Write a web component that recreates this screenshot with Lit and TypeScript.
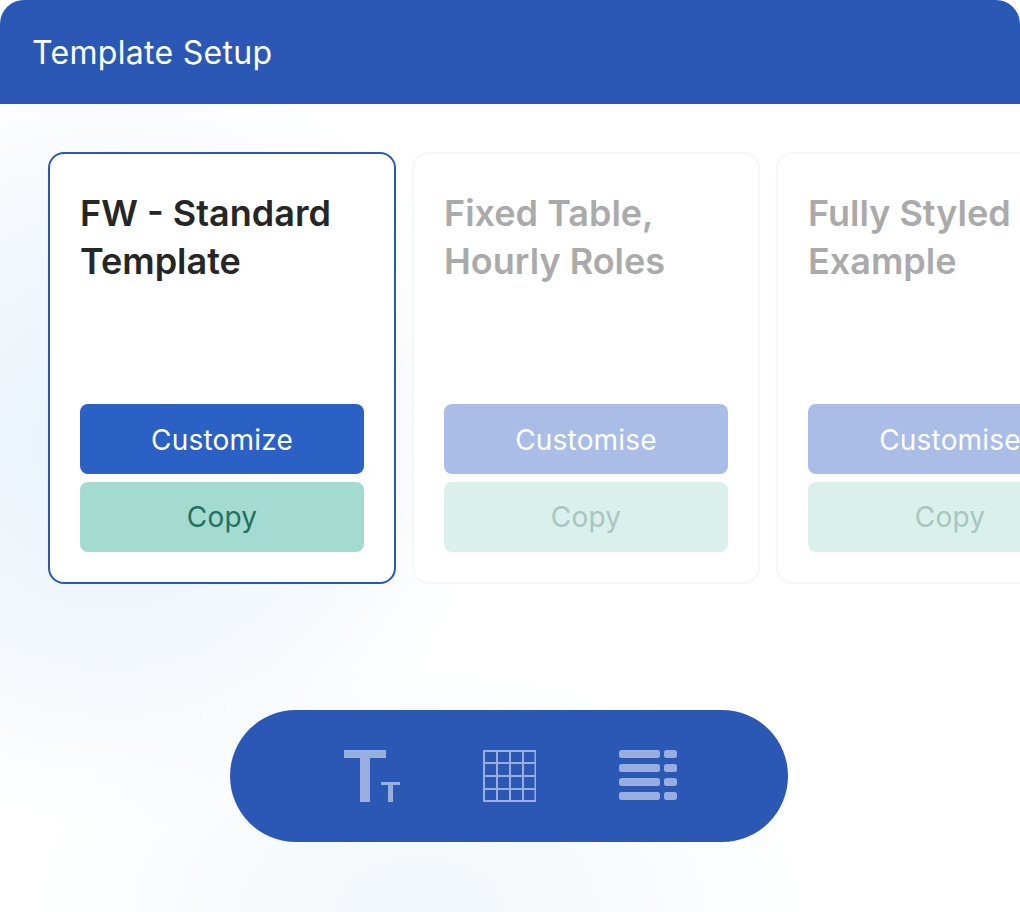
import { LitElement, html, css, svg } from "lit";
import { customElement } from "lit/decorators.js";

interface Card { title: string[]; primary: string; active: boolean; }

const CARDS: Card[] = [
  { title: ["FW - Standard", "Template"], primary: "Customize", active: true },
  { title: ["Fixed Table,", "Hourly Roles"], primary: "Customise", active: false },
  { title: ["Fully Styled", "Example"], primary: "Customise", active: false },
];

const gridLines = [0, 13, 26, 39, 52];

@customElement("app-root")
export class AppRoot extends LitElement {
  static styles = css`
    :host {
      display: block;
      width: 1020px;
      height: 912px;
      overflow: hidden;
      font-family: Inter, "Liberation Sans", sans-serif;
      background-color: #fff;
      background-image:
        radial-gradient(circle 390px at 110px 440px, #e8f3fc 0%, #f1f7fc 48%, rgba(255, 255, 255, 0) 100%),
        radial-gradient(ellipse 400px 250px at 420px 910px, #f1f7fb 0%, rgba(255, 255, 255, 0) 100%);
    }
    .header {
      height: 104px;
      box-sizing: border-box;
      padding-left: 32px;
      display: flex;
      align-items: center;
      background: #2b58b5;
      border-radius: 24px 24px 0 0;
      color: #fff;
      font-size: 32px;
      font-weight: 400;
      letter-spacing: 0.3px;
    }
    .cards {
      display: flex;
      gap: 16px;
      padding: 48px 0 0 48px;
      overflow: hidden;
    }
    .card {
      flex: 0 0 348px;
      height: 432px;
      box-sizing: border-box;
      padding: 35px 30px 30px;
      display: flex;
      flex-direction: column;
      background: #fff;
      border: 2px solid #f5f7fa;
      border-radius: 16px;
    }
    .card.active { border-color: #2b58b5; }
    h2 {
      margin: 0;
      flex: 1;
      font-size: 36px;
      line-height: 48px;
      font-weight: 600;
      color: #aaaaaa;
    }
    .active h2 { color: #262626; }
    .btn {
      height: 70px;
      box-sizing: border-box;
      flex: none;
      display: flex;
      align-items: center;
      justify-content: center;
      border-radius: 8px;
      font-size: 28px;
      letter-spacing: 0.2px;
    }
    .primary { background: #a9bde7; color: #fff; margin-bottom: 8px; padding-top: 2px; }
    .active .primary { background: #2b60c4; }
    .copy { background: #daf0ec; color: #a8c6bf; }
    .active .copy { background: #a4dbd1; color: #22705f; }
    .pill {
      width: 558px;
      height: 132px;
      box-sizing: border-box;
      padding-left: 2px;
      margin: 126px 0 0 230px;
      border-radius: 66px;
      background: #2b58b5;
      display: flex;
      align-items: center;
      justify-content: center;
      gap: 83px;
    }
    svg { display: block; flex: none; }
    .glyph { fill: #98ade0; }
    .line { stroke: #98ade0; stroke-width: 2; fill: none; }
  `;

  render() {
    return html`
      <div class="header">Template Setup</div>
      <div class="cards">
        ${CARDS.map(
          (c) => html`
            <div class="card ${c.active ? "active" : ""}">
              <h2>${c.title[0]}<br />${c.title[1]}</h2>
              <div class="btn primary">${c.primary}</div>
              <div class="btn copy">Copy</div>
            </div>
          `
        )}
      </div>
      <div class="pill">
        <svg width="56" height="52" viewBox="0 0 56 52">
          <path class="glyph" d="M0 0H42V8H26V52H16V8H0Z" />
          <path class="glyph" d="M37 32H56V35H49V52H44V35H37Z" />
        </svg>
        <svg width="53" height="52" viewBox="0 0 53 52">
          ${gridLines.map(
            (p) => svg`
              <path class="line" d="M${p + 0.5 + (p === 52 ? 0 : 0.5)} 0V52" />
              <path class="line" d="M0 ${p === 0 ? 1 : p === 52 ? 51 : p}H53" />
            `
          )}
        </svg>
        <svg width="58" height="52" viewBox="0 0 58 52">
          ${[0, 14, 28, 42].map(
            (y) => svg`
              <rect class="glyph" x="0" y="${y}" width="41" height="8" rx="2.5" />
              <rect class="glyph" x="45" y="${y}" width="13" height="8" rx="2.5" />
            `
          )}
        </svg>
      </div>
    `;
  }
}
